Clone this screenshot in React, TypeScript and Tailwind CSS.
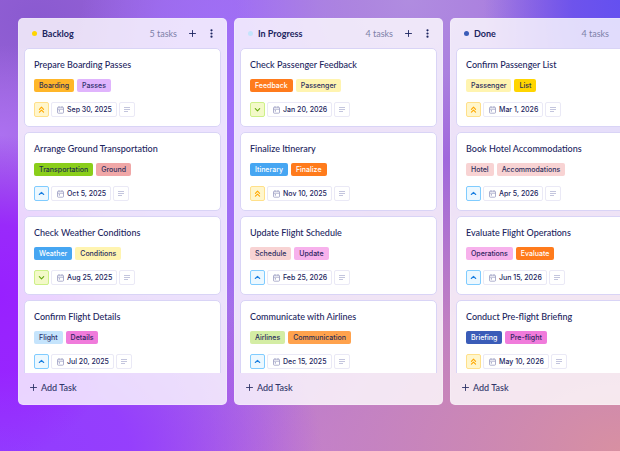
import { useState } from 'react';

type Priority = 'high' | 'medium' | 'low';

type Tag = { label: string; color: string };

type Task = {
  title: string;
  tags: Tag[];
  priority: Priority;
  date: string;
};

type ColumnData = {
  name: string;
  dot: string;
  count: number;
  tasks: Task[];
};

const columns: ColumnData[] = [
  {
    name: 'Backlog',
    dot: 'bg-[#ffd500]',
    count: 5,
    tasks: [
      {
        title: 'Prepare Boarding Passes',
        tags: [
          { label: 'Boarding', color: 'bg-[#ffb629] text-[#2c2f55]' },
          { label: 'Passes', color: 'bg-[#e0b4fd] text-[#2c2f6a]' },
        ],
        priority: 'high',
        date: 'Sep 30, 2025',
      },
      {
        title: 'Arrange Ground Transportation',
        tags: [
          { label: 'Transportation', color: 'bg-[#8ace1a] text-[#1d3049]' },
          { label: 'Ground', color: 'bg-[#f0a7a7] text-[#2c2f5e]' },
        ],
        priority: 'medium',
        date: 'Oct 5, 2025',
      },
      {
        title: 'Check Weather Conditions',
        tags: [
          { label: 'Weather', color: 'bg-[#46a6f2] text-white' },
          { label: 'Conditions', color: 'bg-[#fff4b0] text-[#2c2f5e]' },
        ],
        priority: 'low',
        date: 'Aug 25, 2025',
      },
      {
        title: 'Confirm Flight Details',
        tags: [
          { label: 'Flight', color: 'bg-[#c5e4fc] text-[#2c2f6a]' },
          { label: 'Details', color: 'bg-[#f07bdb] text-[#2c2560]' },
        ],
        priority: 'medium',
        date: 'Jul 20, 2025',
      },
    ],
  },
  {
    name: 'In Progress',
    dot: 'bg-[#c5e4fc]',
    count: 4,
    tasks: [
      {
        title: 'Check Passenger Feedback',
        tags: [
          { label: 'Feedback', color: 'bg-[#ff7b1c] text-white' },
          { label: 'Passenger', color: 'bg-[#fff4b0] text-[#2c2f5e]' },
        ],
        priority: 'low',
        date: 'Jan 20, 2026',
      },
      {
        title: 'Finalize Itinerary',
        tags: [
          { label: 'Itinerary', color: 'bg-[#46a6f2] text-white' },
          { label: 'Finalize', color: 'bg-[#ff7b1c] text-white' },
        ],
        priority: 'high',
        date: 'Nov 10, 2025',
      },
      {
        title: 'Update Flight Schedule',
        tags: [
          { label: 'Schedule', color: 'bg-[#f8d3d3] text-[#2c2f5e]' },
          { label: 'Update', color: 'bg-[#f7b1ec] text-[#2c2560]' },
        ],
        priority: 'medium',
        date: 'Feb 25, 2026',
      },
      {
        title: 'Communicate with Airlines',
        tags: [
          { label: 'Airlines', color: 'bg-[#d4eda4] text-[#2c2f5e]' },
          { label: 'Communication', color: 'bg-[#ffa24d] text-[#2c2f55]' },
        ],
        priority: 'medium',
        date: 'Dec 15, 2025',
      },
    ],
  },
  {
    name: 'Done',
    dot: 'bg-[#3a5cb8]',
    count: 4,
    tasks: [
      {
        title: 'Confirm Passenger List',
        tags: [
          { label: 'Passenger', color: 'bg-[#fff4b0] text-[#2c2f5e]' },
          { label: 'List', color: 'bg-[#ffd500] text-[#2c2f55]' },
        ],
        priority: 'high',
        date: 'Mar 1, 2026',
      },
      {
        title: 'Book Hotel Accommodations',
        tags: [
          { label: 'Hotel', color: 'bg-[#f8d3d3] text-[#2c2f5e]' },
          { label: 'Accommodations', color: 'bg-[#f8d3d3] text-[#2c2f5e]' },
        ],
        priority: 'medium',
        date: 'Apr 5, 2026',
      },
      {
        title: 'Evaluate Flight Operations',
        tags: [
          { label: 'Operations', color: 'bg-[#f7b1ec] text-[#2c2560]' },
          { label: 'Evaluate', color: 'bg-[#ff7b1c] text-white' },
        ],
        priority: 'medium',
        date: 'Jun 15, 2026',
      },
      {
        title: 'Conduct Pre-flight Briefing',
        tags: [
          { label: 'Briefing', color: 'bg-[#3a5cb8] text-white' },
          { label: 'Pre-flight', color: 'bg-[#f07bdb] text-[#2c2560]' },
        ],
        priority: 'high',
        date: 'May 10, 2026',
      },
    ],
  },
];

const priorityStyles: Record<Priority, { box: string; path: string }> = {
  high: { box: 'bg-[#fff6cc] border-[#ffe08a] text-[#ffa800]', path: 'M2.4 4.3 L4.5 2.2 L6.6 4.3 M2.4 7.2 L4.5 5.1 L6.6 7.2' },
  medium: { box: 'bg-[#ecf8ff] border-[#80ccff] text-[#1a7fe0]', path: 'M2.3 5.5 L4.5 3.4 L6.7 5.5' },
  low: { box: 'bg-[#f3f9c8] border-[#cdf088] text-[#64a80c]', path: 'M2.3 3.7 L4.5 5.8 L6.7 3.7' },
};

function PlusIcon() {
  return (
    <svg width="7" height="7" viewBox="0 0 7 7" fill="none" stroke="currentColor" strokeWidth="0.9" strokeLinecap="round">
      <path d="M3.5 0.5 V6.5 M0.5 3.5 H6.5" />
    </svg>
  );
}

function CalendarIcon() {
  return (
    <svg width="7" height="8" viewBox="0 0 7 8" fill="none" stroke="#9a9dc2" strokeWidth="0.8">
      <rect x="0.5" y="1.2" width="6" height="6" rx="0.8" />
      <path d="M0.5 3.2 H6.5 M2 0.2 V1.8 M5 0.2 V1.8" />
      <path d="M1.8 4.9 H3" strokeWidth="1.1" />
    </svg>
  );
}

function TaskCard({ task }: { task: Task }) {
  const priority = priorityStyles[task.priority];

  return (
    <article className="shrink-0 rounded-[5px] border border-[#d9d4f6] bg-white px-[9px] pt-[10px] pb-[9px]">
      <h3 className="text-[9px] leading-[12px] font-medium whitespace-nowrap text-[#1c2560]">{task.title}</h3>
      <div className="mt-2 flex gap-[3px] font-['Inter','Liberation_Sans',sans-serif]">
        {task.tags.map((tag) => (
          <span key={tag.label} className={`h-[13px] rounded-[2px] px-[5px] text-[7px] leading-[13px] font-medium ${tag.color}`}>
            {tag.label}
          </span>
        ))}
      </div>
      <div className="mt-[10px] flex gap-[2px] font-['Inter','Liberation_Sans',sans-serif]">
        <button aria-label={`Priority: ${task.priority}`} className={`flex size-[15px] items-center justify-center rounded-[2px] border ${priority.box}`}>
          <svg width="9" height="9" viewBox="0 0 9 9" fill="none" stroke="currentColor" strokeWidth="1.1" strokeLinecap="round" strokeLinejoin="round">
            <path d={priority.path} />
          </svg>
        </button>
        <button className="flex h-[15px] items-center gap-[3px] rounded-[2px] border border-[#eae9f6] pr-1 pl-[5px] text-[7px] leading-[13px] font-medium whitespace-nowrap text-[#1c2560]">
          <CalendarIcon />
          {task.date}
        </button>
        <button aria-label="Description" className="flex h-[15px] w-4 items-center justify-center rounded-[2px] border border-[#eae9f6] text-[#b4b6d4]">
          <svg width="6" height="5" viewBox="0 0 6 5" fill="none" stroke="currentColor" strokeWidth="0.8">
            <path d="M0 0.5 H6 M0 2.5 H6 M0 4.5 H4" />
          </svg>
        </button>
      </div>
    </article>
  );
}

function Column({ column, onAdd }: { column: ColumnData; onAdd: () => void }) {
  return (
    <section className="flex w-[209px] shrink-0 flex-col overflow-hidden rounded-[5px] border border-white/20 bg-white/80">
      <header className="flex h-[29px] shrink-0 items-center pr-[11px] pl-[13px] text-[#1c2560]">
        <span className={`size-[5px] rounded-full ${column.dot}`} />
        <h2 className="ml-[5px] text-[9px] font-bold">{column.name}</h2>
        <span className="ml-auto text-[9px] text-[#7d7fa8]">{column.count} tasks</span>
        <button aria-label={`Add task to ${column.name}`} onClick={onAdd} className="ml-3 flex size-[7px] items-center justify-center">
          <PlusIcon />
        </button>
        <button aria-label={`${column.name} options`} className="ml-3 flex h-3 w-[7px] items-center justify-center">
          <svg width="3" height="9" viewBox="0 0 3 9" fill="currentColor">
            <circle cx="1.5" cy="1.3" r="1.1" />
            <circle cx="1.5" cy="4.5" r="1.1" />
            <circle cx="1.5" cy="7.7" r="1.1" />
          </svg>
        </button>
      </header>
      <div className="flex min-h-0 flex-1 flex-col gap-[5px] overflow-hidden px-[5px]">
        {column.tasks.map((task, idx) => (
          <TaskCard key={idx} task={task} />
        ))}
      </div>
      <button onClick={onAdd} className="flex h-[31px] shrink-0 items-center gap-1 px-[11px] pb-[2px] text-[9px] font-medium text-[#2f3468]">
        <PlusIcon />
        Add Task
      </button>
    </section>
  );
}

export default function App() {
  const [board, setBoard] = useState(columns);

  const addTask = (index: number) => {
    const task: Task = { title: 'New Task', tags: [], priority: 'medium', date: 'No date' };
    setBoard(board.map((col, idx) => (idx === index ? { ...col, count: col.count + 1, tasks: [...col.tasks, task] } : col)));
  };

  return (
    <main className="h-screen overflow-hidden bg-[#a068dc] bg-[radial-gradient(ellipse_22%_50%_at_100%_0%,#6450f0_0%,#6650eedd_35%,transparent_100%),radial-gradient(ellipse_28%_36%_at_66%_0%,#b08ce0_0%,#b08ce0aa_50%,transparent_100%),radial-gradient(ellipse_20%_36%_at_0%_66%,#9820ff_0%,#9820ffdd_45%,transparent_100%),radial-gradient(ellipse_52%_45%_at_0%_100%,#923cff_0%,#943cfff0_40%,transparent_100%),radial-gradient(ellipse_75%_70%_at_100%_100%,#d890a2_0%,#c886bccc_55%,transparent_100%),radial-gradient(ellipse_24%_80%_at_36%_25%,#a070fa_0%,#a070faaa_50%,transparent_100%),radial-gradient(ellipse_20%_20%_at_0%_30%,#ac70f0_0%,transparent_100%),radial-gradient(ellipse_35%_35%_at_6%_4%,#8a5ad0_0%,transparent_100%),radial-gradient(ellipse_40%_40%_at_50%_100%,#be78dc_0%,transparent_100%)] pt-[18px] pb-[46px] pl-[18px] font-['Lato','Liberation_Sans',sans-serif]">
      <div className="flex h-full gap-[7px]">
        {board.map((column, idx) => (
          <Column key={column.name} column={column} onAdd={() => addTask(idx)} />
        ))}
      </div>
    </main>
  );
}
